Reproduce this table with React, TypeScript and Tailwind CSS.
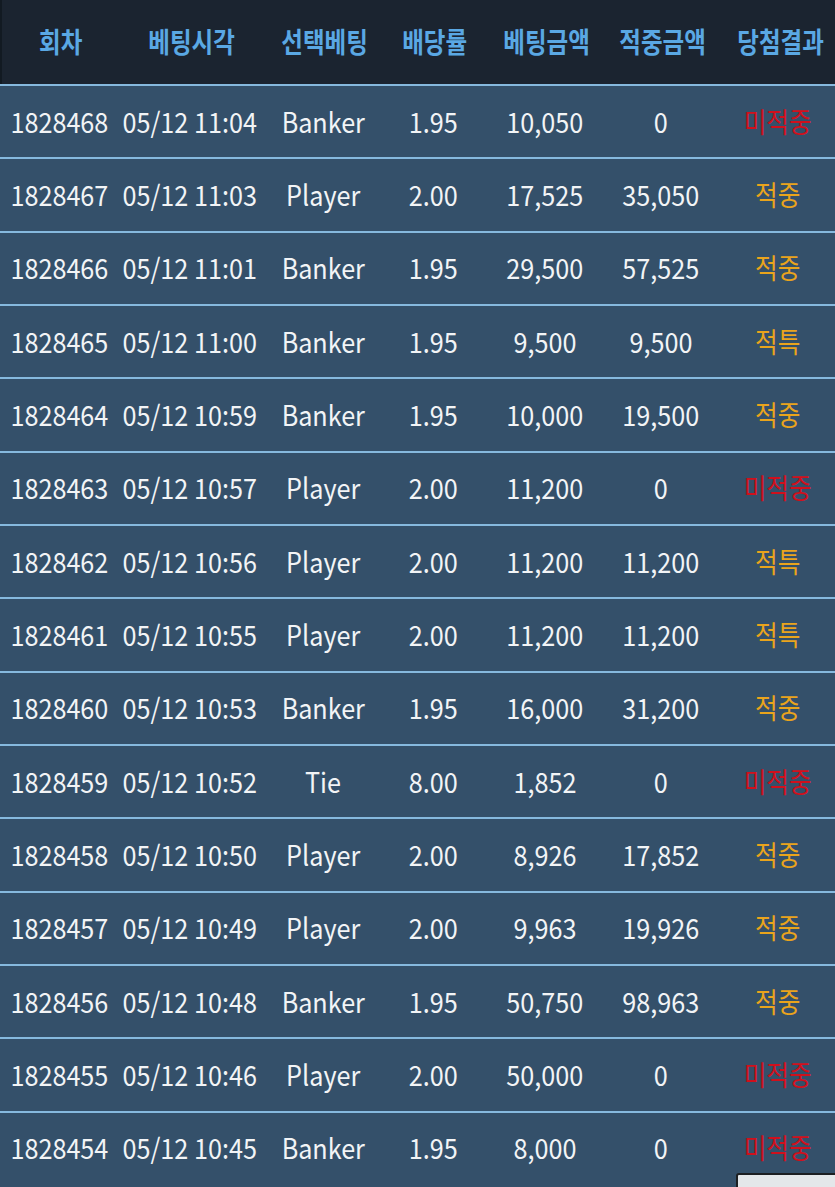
import React from "react";

type Row = [string, string, string, string, string, string, string];

const rows: Row[] = [
  ["1828468", "05/12 11:04", "Banker", "1.95", "10,050", "0", "미적중"],
  ["1828467", "05/12 11:03", "Player", "2.00", "17,525", "35,050", "적중"],
  ["1828466", "05/12 11:01", "Banker", "1.95", "29,500", "57,525", "적중"],
  ["1828465", "05/12 11:00", "Banker", "1.95", "9,500", "9,500", "적특"],
  ["1828464", "05/12 10:59", "Banker", "1.95", "10,000", "19,500", "적중"],
  ["1828463", "05/12 10:57", "Player", "2.00", "11,200", "0", "미적중"],
  ["1828462", "05/12 10:56", "Player", "2.00", "11,200", "11,200", "적특"],
  ["1828461", "05/12 10:55", "Player", "2.00", "11,200", "11,200", "적특"],
  ["1828460", "05/12 10:53", "Banker", "1.95", "16,000", "31,200", "적중"],
  ["1828459", "05/12 10:52", "Tie", "8.00", "1,852", "0", "미적중"],
  ["1828458", "05/12 10:50", "Player", "2.00", "8,926", "17,852", "적중"],
  ["1828457", "05/12 10:49", "Player", "2.00", "9,963", "19,926", "적중"],
  ["1828456", "05/12 10:48", "Banker", "1.95", "50,750", "98,963", "적중"],
  ["1828455", "05/12 10:46", "Player", "2.00", "50,000", "0", "미적중"],
  ["1828454", "05/12 10:45", "Banker", "1.95", "8,000", "0", "미적중"],
];

const headers = ["회차", "베팅시각", "선택베팅", "배당률", "베팅금액", "적중금액", "당첨결과"];

const grid = "grid grid-cols-[118px_144px_122px_98px_126px_106px_121px]";

export default function App() {
  return (
    <div
      className="relative w-[835px] h-[1187px] overflow-hidden bg-[#34506a]"
      style={{ fontFamily: '"Noto Sans CJK KR", "Noto Sans", sans-serif' }}
    >
      <div className={`${grid} h-[84px] items-center bg-[#1b2430] border-l-2 border-[#121a22]`}>
        {headers.map((h, i) => (
          <div
            key={h}
            className={`flex justify-center whitespace-nowrap ${i === 6 ? "pl-[8px]" : ""}`}
          >
            <span className="inline-block scale-x-[0.84] -translate-y-[1px] text-[28px] leading-none font-bold text-[#5aa8e4]">
              {h}
            </span>
          </div>
        ))}
      </div>
      {rows.map((r) => (
        <div
          key={r[0]}
          className={`${grid} h-[73.33px] items-center border-t-2 border-[#86b9de] bg-[#34506a] text-[28px] leading-none text-[#f2f4f6]`}
        >
          {r.slice(0, 6).map((c, i) => (
            <div key={i} className="flex justify-center whitespace-nowrap">
              <span className="inline-block scale-x-[0.9] -translate-y-[1px]">{c}</span>
            </div>
          ))}
          <div className="flex justify-center whitespace-nowrap pl-[7px]">
            <span
              className={`inline-block scale-x-[0.88] -translate-y-[1px] ${
                r[6] === "미적중" ? "text-[#d0101c]" : "text-[#eaa41c]"
              }`}
            >
              {r[6]}
            </span>
          </div>
        </div>
      ))}
      <div className="absolute left-[736px] top-[1173px] w-[110px] h-[30px] border-2 border-[#1c1f22] rounded-tl-[3px] bg-[#e4e7ea]" />
    </div>
  );
}
